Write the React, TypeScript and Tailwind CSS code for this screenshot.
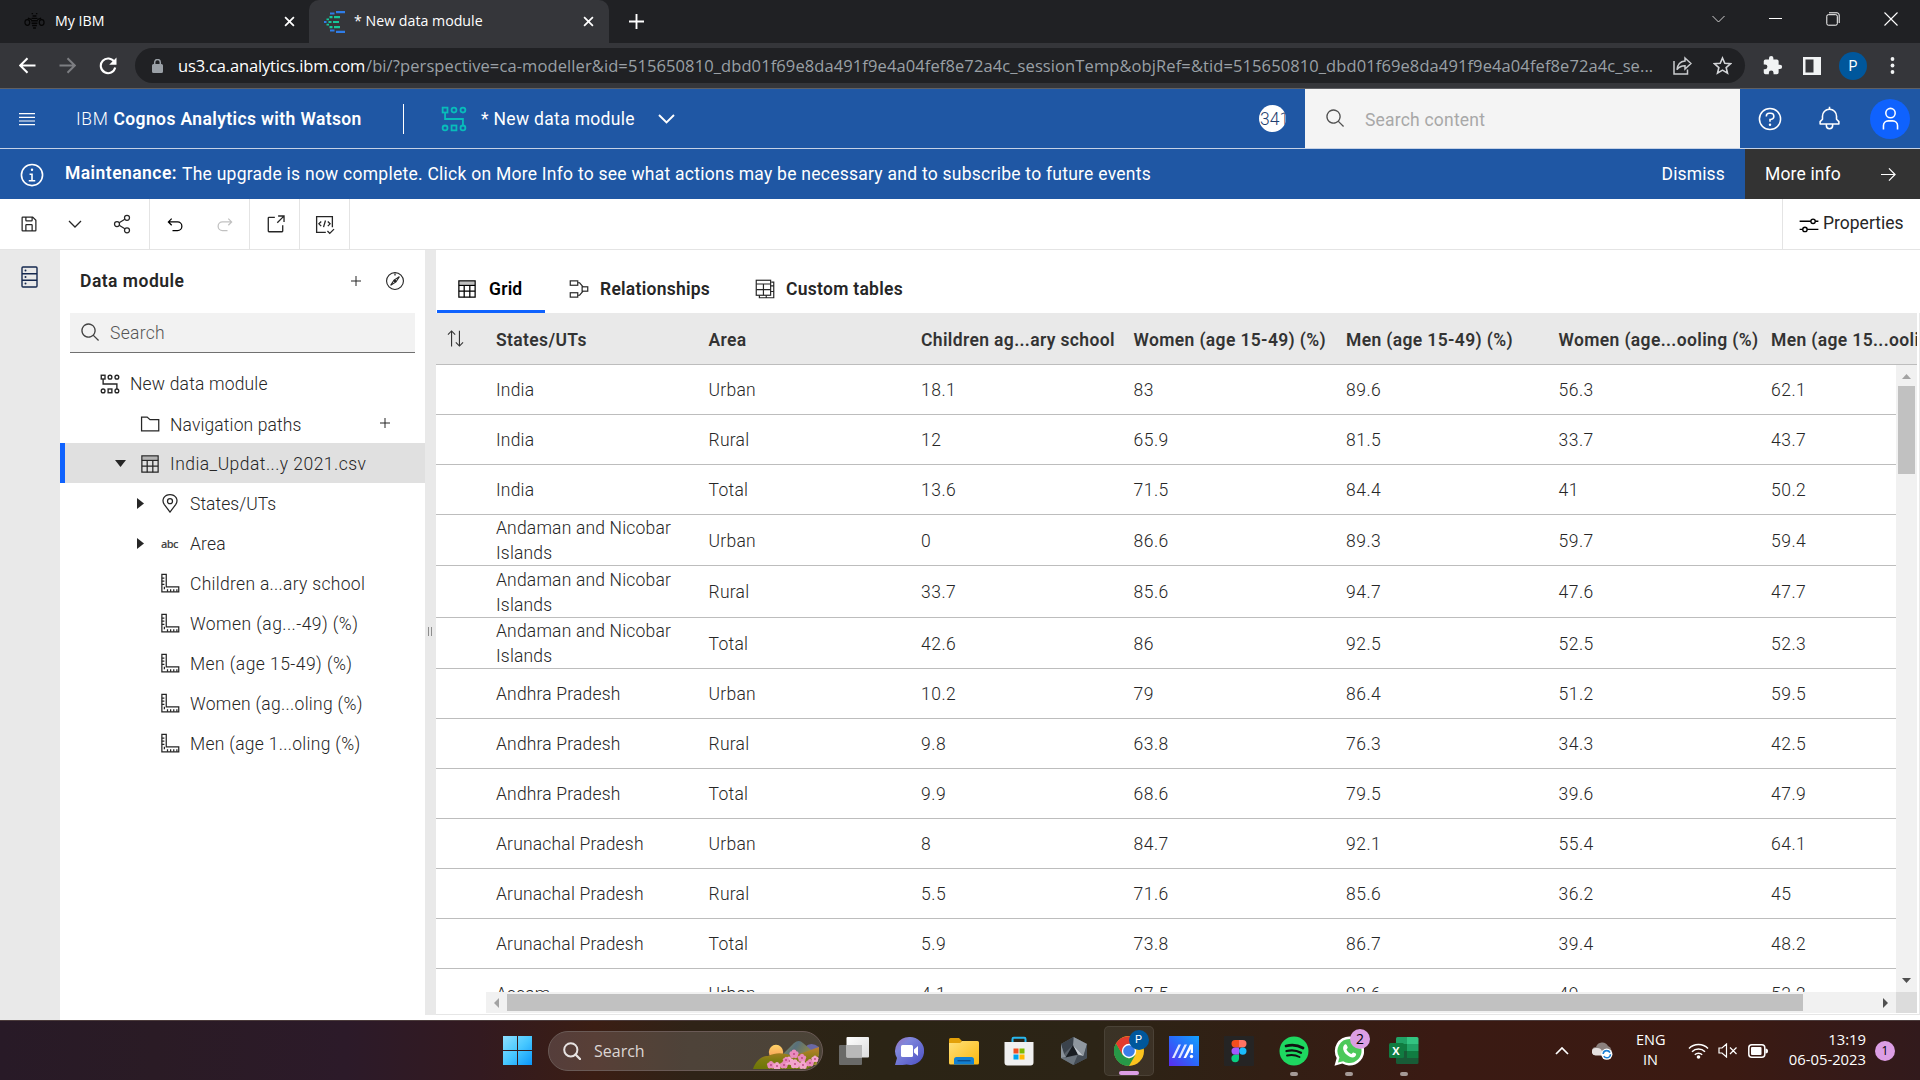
import React from "react";

type IconProps = { className?: string; children: React.ReactNode; box?: string };

function Icon({ className = "size-5", children, box = "0 0 32 32" }: IconProps) {
  return (
    <svg viewBox={box} className={`${className} shrink-0`} fill="currentColor" aria-hidden="true">
      {children}
    </svg>
  );
}

const line = { fill: "none", stroke: "currentColor", strokeWidth: 2 } as const;

/* ---------- shared icons ---------- */

const SearchIcon = ({ className }: { className?: string }) => (
  <Icon className={className}>
    <path d="M29 27.586l-7.552-7.552a11.018 11.018 0 1 0-1.414 1.414L27.586 29zM4 13a9 9 0 1 1 9 9 9.01 9.01 0 0 1-9-9z" />
  </Icon>
);

const ModuleIcon = ({ className }: { className?: string }) => (
  <Icon className={className}>
    <g {...line} strokeWidth="2.200">
      <rect x="2" y="2" width="6" height="6" />
      <circle cx="16" cy="5" r="3" />
      <circle cx="27" cy="5" r="3" />
      <circle cx="5" cy="27" r="3" />
      <rect x="13" y="24" width="6" height="6" />
      <circle cx="27" cy="27" r="3" />
      <path d="M5 8v8h22v8" />
    </g>
  </Icon>
);

const TableIcon = ({ className }: { className?: string }) => (
  <Icon className={className}>
    <g {...line}>
      <rect x="3" y="3" width="26" height="26" />
      <path d="M3 10h26M3 19.500h26M11.500 10v19M20.500 10v19" />
    </g>
    <path d="M4 4h24v5H4z" opacity=".25" />
  </Icon>
);

const PlusIcon = ({ className }: { className?: string }) => (
  <Icon className={className}>
    <path d="M17 15V6h-2v9H6v2h9v9h2v-9h9v-2z" />
  </Icon>
);

const RulerIcon = () => (
  <Icon className="size-[20px]">
    <g {...line}>
      <path d="M3 2h7v20h20v8H3z" />
      <path d="M3 8h4M3 13h4M3 18h4M12 30v-4M17 30v-4M22 30v-4M7 22v4M27 30v-4" />
    </g>
  </Icon>
);

const PinIcon = () => (
  <Icon className="size-[20px]">
    <g {...line}>
      <path d="M16 30.500L7 18.500C1.500 10.500 7.500 2.500 16 2.500s14.500 8 9 16z" />
      <circle cx="16" cy="13" r="4" />
    </g>
  </Icon>
);

/* ---------- browser chrome ---------- */

const TabClose = () => (
  <Icon className="size-[11px] text-white" box="0 0 12 12">
    <path d="M1.200 1.200l9.600 9.600M10.800 1.200l-9.600 9.600" stroke="currentColor" strokeWidth="1.900" />
  </Icon>
);

function BrowserTabs() {
  return (
    <div className="flex h-[43px] bg-[#202124] font-['Open_Sans',sans-serif] text-[14.2px] text-white">
      <div className="flex w-[309px] items-center pl-[24px]">
        <Icon className="size-[21px] text-[#050505]" box="0 0 22 18">
          <path d="M8 5h6v1.500H8zM7.500 7.500h7V9h-7zM8 10h6v1.500H8zM8.500 12.500h5V14h-5zM9.500 15h3v1.500h-3zM9 2.500h4V4H9zM8 0h1.500v1.500H8zM12.500 0H14v1.500h-1.500z" />
          <g fill="none" stroke="currentColor" strokeWidth="1.300">
            <path d="M8 7L4 5.500M14 7l4-1.500" />
            <ellipse cx="3.500" cy="10" rx="2.500" ry="3" />
            <ellipse cx="18.500" cy="10" rx="2.500" ry="3" />
          </g>
        </Icon>
        <span className="ml-[10px] pb-[2px]">My IBM</span>
        <span className="ml-auto pr-[14px]">
          <TabClose />
        </span>
      </div>
      <div className="flex w-[300px] items-center rounded-t-[10px] bg-[#35363a] pl-[15px]">
        <Icon className="size-[22px]" box="0 0 22 22">
          <g fill="#2f7de8">
            <path d="M12 0h9v2.200h-9zM12 19.800h9V22h-9zM6 1.500h4.500v2H6zM6 18.500h4.500v2H6zM0 10h2.500v2H0z" />
          </g>
          <g fill="#16c79a">
            <path d="M10 5h6v2.200h-6zM5.500 5h3v2.200h-3zM9 10h6v2H9zM4.500 10h3v2h-3zM10 15h6v2.200h-6zM5.500 15h3v2.200h-3zM2.500 7.500h2.500v1.700H2.500zM2.500 12.800h2.500v1.700H2.500z" />
          </g>
        </Icon>
        <span className="ml-[8px] pb-[2px]">* New data module</span>
        <span className="ml-auto pr-[15px]">
          <TabClose />
        </span>
      </div>
      <div className="flex flex-1 items-center pl-[20px]">
        <Icon className="size-[15px]" box="0 0 16 16">
          <path d="M7 0h2v7h7v2H9v7H7V9H0V7h7z" />
        </Icon>
        <div className="ml-auto flex items-center gap-[44px] pr-[22px] pb-[6px]">
          <Icon className="h-[8px] w-[13px]" box="0 0 13 8">
            <path d="M.5 1l6 6 6-6" fill="none" stroke="#d0d0d0" />
          </Icon>
          <Icon className="h-[13px] w-[13px]" box="0 0 13 13">
            <path d="M0 6.500h13" stroke="white" />
          </Icon>
          <Icon className="size-[14px]" box="0 0 14 14">
            <g fill="none" stroke="white">
              <rect x=".8" y="2.700" width="10.500" height="10.500" rx="1.500" />
              <path d="M3 .8h8a2.200 2.200 0 0 1 2.200 2.200v8" />
            </g>
          </Icon>
          <Icon className="size-[14px]" box="0 0 14 14">
            <path d="M.5.5l13 13M13.500.5l-13 13" stroke="white" strokeWidth="1.100" />
          </Icon>
        </div>
      </div>
    </div>
  );
}

function AddressBar() {
  return (
    <div className="flex h-[46px] items-center border-b border-[#5f6064] bg-[#35363a] pl-[19px]">
      <Icon className="size-[17px] text-white" box="0 0 17 17">
        <path d="M16.500 8.500H1.500M8.500 1.200L1.200 8.500l7.300 7.300" fill="none" stroke="currentColor" strokeWidth="2" />
      </Icon>
      <Icon className="ml-[23px] size-[17px] text-[#7d7e82]" box="0 0 17 17">
        <path d="M.5 8.500h15M8.500 1.200l7.300 7.300-7.300 7.300" fill="none" stroke="currentColor" strokeWidth="2" />
      </Icon>
      <Icon className="ml-[23px] size-[18px] text-white" box="0 0 18 18">
        <path d="M15.300 5A7.300 7.300 0 1 0 16.200 10.500" fill="none" stroke="currentColor" strokeWidth="2.100" />
        <path d="M17.500.5v7.300h-7.300z" />
      </Icon>
      <div className="ml-[18px] flex h-[35px] w-[1610px] items-center rounded-full bg-[#202124] pl-[17px] font-['Open_Sans',sans-serif] text-[16.5px]">
        <Icon className="h-[14px] w-[11px] text-[#9aa0a6]" box="0 0 11 14">
          <path d="M1.500 5h8A1.500 1.500 0 0 1 11 6.500v6A1.500 1.500 0 0 1 9.500 14h-8A1.500 1.500 0 0 1 0 12.500v-6A1.500 1.500 0 0 1 1.500 5z" />
          <path d="M2.700 5.500V3.300a2.800 2.800 0 0 1 5.600 0v2.200" fill="none" stroke="currentColor" strokeWidth="1.500" />
        </Icon>
        <div className="ml-[15px] flex w-[1479px] whitespace-nowrap">
          <span className="w-[188px] tracking-[-0.17px] text-white">us3.ca.analytics.ibm.com</span>
          <span className="tracking-[0.1px] text-[#9aa0a6]">
            /bi/?perspective=ca-modeller&amp;id=515650810_dbd01f69e8da491f9e4a04fef8e72a4c_sessionTemp&amp;objRef=&amp;tid=515650810_dbd01f69e8da491f9e4a04fef8e72a4c_se...
          </span>
        </div>
        <Icon className="ml-[16px] size-[19px] text-[#c9cbce]" box="0 0 19 19">
          <g fill="none" stroke="currentColor" strokeWidth="1.500">
            <path d="M1 5v13h13.500v-4.500" />
            <path d="M12 2l6 5.500-6 5.500v-3.300c-3.500 0-6 1-8 4 .5-5 3.500-8.300 8-8.700z" />
          </g>
        </Icon>
        <Icon className="ml-[21px] size-[19px] text-[#d3d5d8]" box="0 0 24 24">
          <path
            d="M12 2.500l2.900 6.700 7.200.6-5.500 4.800 1.700 7.100L12 17.900l-6.300 3.800 1.700-7.100L1.900 9.800l7.200-.6z"
            fill="none"
            stroke="currentColor"
            strokeWidth="2"
          />
        </Icon>
      </div>
      <Icon className="ml-[17px] size-[21px] text-[#f1f3f4]" box="0 0 24 24">
        <path d="M20.500 11H19V7a2 2 0 0 0-2-2h-4V3.500a2.500 2.500 0 0 0-5 0V5H4a2 2 0 0 0-2 2v3.800h1.500a2.700 2.700 0 0 1 0 5.400H2V20a2 2 0 0 0 2 2h3.800v-1.500a2.700 2.700 0 0 1 5.400 0V22H17a2 2 0 0 0 2-2v-4h1.500a2.500 2.500 0 0 0 0-5z" />
      </Icon>
      <Icon className="ml-[20px] size-[18px] text-[#f1f3f4]" box="0 0 18 18">
        <path d="M0 0h18v18H0zM2.500 2.500v13h8v-13z" fillRule="evenodd" />
      </Icon>
      <span className="ml-[18px] flex size-[28px] items-center justify-center rounded-full bg-[#00579c] font-['Roboto'] text-[14px] text-white">
        P
      </span>
      <Icon className="ml-[23px] h-[17px] w-[5px] text-[#f1f3f4]" box="0 0 5 17">
        <circle cx="2.500" cy="2" r="1.900" />
        <circle cx="2.500" cy="8.500" r="1.900" />
        <circle cx="2.500" cy="15" r="1.900" />
      </Icon>
    </div>
  );
}

/* ---------- Cognos header ---------- */

function AppHeader() {
  return (
    <header className="flex h-[60px] items-center border-b border-[#c6d2e6] bg-[#1f57a4] text-white">
      <Icon className="ml-[19px] size-[16px]" box="0 0 16 16">
        <path d="M0 2h16v1.200H0zM0 5.700h16v1.200H0zM0 9.400h16v1.200H0zM0 13.100h16v1.200H0z" />
      </Icon>
      <div className="ml-[41px] w-[286px] whitespace-nowrap">
        <span className="mr-[5px] font-light tracking-[0.65px]">IBM</span>
        <span className="font-semibold tracking-[0.38px]">Cognos Analytics with Watson</span>
      </div>
      <div className="ml-[41px] h-[30px] w-px bg-white" />
      <ModuleIcon className="ml-[37px] size-[26px] text-[#08bdba]" />
      <span className="ml-[14px] w-[154px] tracking-[0.32px] whitespace-nowrap">* New data module</span>
      <Icon className="ml-[23px] h-[10px] w-[17px]" box="0 0 17 10">
        <path d="M1 1l7.500 7.500L16 1" fill="none" stroke="white" strokeWidth="1.900" />
      </Icon>
      <span className="mr-[19px] ml-auto flex size-[27px] items-center overflow-hidden rounded-full bg-white pl-px text-[17.5px] font-light whitespace-nowrap text-[#1f3f70]">
        341
      </span>
      <div className="flex h-full w-[435px] items-center bg-[#f4f4f4] pl-[20px]">
        <SearchIcon className="size-[21px] text-[#525252]" />
        <span className="ml-[19px] pt-[2px] tracking-[0.2px] text-[#a8a8a8]">Search content</span>
      </div>
      <div className="flex w-[180px] items-center pl-[17px]">
        <Icon className="size-[26px]">
          <g {...line} strokeWidth="1.900">
            <circle cx="16" cy="16" r="13" />
            <path d="M11.500 13v-.5a3.500 3.500 0 0 1 3.500-3.500h2a3.500 3.500 0 0 1 0 7.500h-1v3" />
          </g>
          <circle cx="16" cy="23" r="1.500" />
        </Icon>
        <Icon className="ml-[34px] size-[25px]">
          <path d="M28.707 19.293 26 16.586V13a10.014 10.014 0 0 0-9-9.950V1h-2v2.050A10.014 10.014 0 0 0 6 13v3.586l-2.707 2.707A1 1 0 0 0 3 20v3a1 1 0 0 0 1 1h7v1a5 5 0 0 0 10 0v-1h7a1 1 0 0 0 1-1v-3a1 1 0 0 0-.293-.707zM19 25a3 3 0 0 1-6 0v-1h6zm8-3H5v-1.586l2.707-2.707A1 1 0 0 0 8 17v-4a8 8 0 0 1 16 0v4a1 1 0 0 0 .293.707L27 20.414z" />
        </Icon>
        <span className="ml-[28px] flex size-[40px] items-center justify-center rounded-full bg-[#0f62fe]">
          <Icon className="size-[25px]">
            <path d="M16 4a5 5 0 1 1-5 5 5 5 0 0 1 5-5m0-2a7 7 0 1 0 7 7 7 7 0 0 0-7-7zM26 30h-2v-5a5 5 0 0 0-5-5h-6a5 5 0 0 0-5 5v5H6v-5a7 7 0 0 1 7-7h6a7 7 0 0 1 7 7z" />
          </Icon>
        </span>
      </div>
    </header>
  );
}

function MaintenanceBanner() {
  return (
    <div className="flex h-[50px] items-center bg-[#1f57a4] whitespace-nowrap text-white">
      <Icon className="mt-[2px] ml-[19px] size-[26px]">
        <circle cx="16" cy="16" r="13" {...line} />
        <path d="M17 22v-8h-4v2h2v6h-3v2h8v-2zM16 8a1.500 1.500 0 1 0 1.500 1.500A1.500 1.500 0 0 0 16 8z" />
      </Icon>
      <span className="ml-[20px] w-[117px] pb-[2px] font-semibold tracking-[0.45px]">Maintenance:</span>
      <span className="tracking-[0.25px]">
        The upgrade is now complete. Click on More Info to see what actions may be necessary and to subscribe to future
        events
      </span>
      <span className="mr-[20px] ml-auto tracking-[0.15px]">Dismiss</span>
      <div className="flex h-full w-[175px] items-center bg-[#333333] pl-[20px]">
        <span className="w-[116px] tracking-[0.15px]">More info</span>
        <Icon className="size-[15px]" box="0 0 16 16">
          <path d="M0 8h15M8.500 1.500L15 8l-6.500 6.500" fill="none" stroke="white" strokeWidth="1.300" />
        </Icon>
      </div>
    </div>
  );
}

/* ---------- toolbar ---------- */

function Toolbar() {
  return (
    <div className="flex h-[51px] border-b border-[#e4e4e4] bg-white text-[#262626]">
      <div className="flex w-[150px] items-center border-r border-[#e4e4e4] pl-[19px]">
        <Icon className="size-[20px]">
          <path d="M27.710 9.290l-5-5A1 1 0 0 0 22 4H6a2 2 0 0 0-2 2v20a2 2 0 0 0 2 2h20a2 2 0 0 0 2-2V10a1 1 0 0 0-.290-.710zM12 6h8v4h-8zm8 20h-8v-8h8zm2 0v-8a2 2 0 0 0-2-2h-8a2 2 0 0 0-2 2v8H6V6h4v4a2 2 0 0 0 2 2h8a2 2 0 0 0 2-2V6.410l4 4V26z" />
        </Icon>
        <Icon className="ml-[29px] h-[8px] w-[14px]" box="0 0 14 8">
          <path d="M1 1l6 6 6-6" fill="none" stroke="currentColor" strokeWidth="1.300" />
        </Icon>
        <Icon className="ml-[30px] size-[20px]">
          <g {...line}>
            <circle cx="24" cy="6" r="4" />
            <circle cx="24" cy="26" r="4" />
            <circle cx="8" cy="16" r="4" />
            <path d="M11.500 14l9-5.500M11.500 18l9 5.500" />
          </g>
        </Icon>
      </div>
      <div className="flex w-[100px] items-center border-r border-[#e4e4e4] pl-[15px]">
        <Icon className="mt-[2px] size-[20px] text-black">
          <path d="M20 10H7.815l3.587-3.586L10 5l-6 6 6 6 1.402-1.415L7.818 12H20a6 6 0 0 1 0 12h-8v2h8a8 8 0 0 0 0-16z" />
        </Icon>
        <Icon className="mt-[2px] ml-[30px] size-[20px] text-[#c1c1c1]">
          <path d="M12 10h12.185l-3.587-3.586L22 5l6 6-6 6-1.402-1.415L24.182 12H12a6 6 0 0 0 0 12h8v2h-8a8 8 0 0 1 0-16z" />
        </Icon>
      </div>
      <div className="flex w-[50px] items-center justify-center border-r border-[#e4e4e4] pl-px">
        <Icon className="size-[21px]">
          <path d="M26 28H6a2 2 0 0 1-2-2V6a2 2 0 0 1 2-2h9v2H6v20h20v-9h2v9a2 2 0 0 1-2 2z" />
          <path d="M20 2v2h6.586L18 12.586 19.414 14 28 5.414V12h2V2z" />
        </Icon>
      </div>
      <div className="flex w-[50px] items-center justify-center border-r border-[#e4e4e4]">
        <Icon className="size-[21px]">
          <g {...line}>
            <path d="M28 20V4H4v24h14M20.500 26l3.500 3.500 6.500-6.500" />
            <path d="M11 11.500L7.500 15l3.500 3.500M21 11.500l3.500 3.500-3.500 3.500M17.500 10l-3 10" />
          </g>
        </Icon>
      </div>
      <div className="ml-auto flex w-[138px] items-center border-l border-[#e4e4e4] pl-[16px]">
        <Icon className="mt-[1px] size-[20px] text-black">
          <g {...line} strokeWidth="2.200">
            <path d="M1 10h18M26 10h5M1 23h5M13 23h18" />
            <circle cx="22.500" cy="10" r="3.500" />
            <circle cx="9.500" cy="23" r="3.500" />
          </g>
        </Icon>
        <span className="ml-[4px] pb-[2px] text-[#262626]">Properties</span>
      </div>
    </div>
  );
}

/* ---------- data module panel ---------- */

const Caret = ({ open }: { open?: boolean }) =>
  open ? (
    <Icon className="h-[7px] w-[11px]" box="0 0 11 7">
      <path d="M0 0h11L5.500 7z" />
    </Icon>
  ) : (
    <Icon className="h-[11px] w-[7px]" box="0 0 7 11">
      <path d="M0 0v11l7-5.500z" />
    </Icon>
  );

const measures = [
  "Children a...ary school",
  "Women (ag...-49) (%)",
  "Men (age 15-49) (%)",
  "Women (ag...oling (%)",
  "Men (age 1...oling (%)",
];

function ModulePanel() {
  return (
    <aside className="flex w-[365px] flex-col bg-white font-light text-[#262626]">
      <div className="flex h-[63px] items-center pb-[2px] pl-[20px]">
        <span className="font-semibold tracking-[0.48px]">Data module</span>
        <PlusIcon className="ml-auto size-[16px]" />
        <Icon className="mr-[20px] ml-[21px] size-[20px]">
          <g {...line} strokeWidth="1.800">
            <circle cx="16" cy="16" r="13.500" />
            <path d="M23 9L14.500 14.500 9 23l8.500-5.500z" />
          </g>
          <circle cx="16" cy="16" r="2" />
          <path d="M15 4h2v3h-2z" />
        </Icon>
      </div>
      <div className="mx-[10px] flex h-[40px] items-center border-b border-[#707070] bg-[#f2f2f2] pl-[10px]">
        <SearchIcon className="size-[21px] text-[#444]" />
        <span className="ml-[9px] tracking-[0.3px] text-[#555]">Search</span>
      </div>
      <div className="flex flex-col pt-[10px] tracking-[0.18px] whitespace-nowrap">
        <div className="flex h-[41px] items-center pl-[40px]">
          <ModuleIcon className="size-[20px]" />
          <span className="ml-[10px]">New data module</span>
        </div>
        <div className="flex h-[39px] items-center pl-[80px]">
          <Icon className="size-[20px]">
            <path d="M2.500 5h9l4.500 4h14v18H2.500z" {...line} />
          </Icon>
          <span className="ml-[10px] pt-[2px] tracking-[0.12px]">Navigation paths</span>
          <PlusIcon className="mr-[32px] mb-px ml-auto size-[16px]" />
        </div>
        <div className="flex h-[40px] items-center border-l-[5px] border-[#0f62fe] bg-[#e0e0e0] pl-[50px]">
          <Caret open />
          <span className="ml-[14px] pt-px">
            <TableIcon className="size-[20px]" />
          </span>
          <span className="ml-[10px] pt-[2px] tracking-[0.46px]">India_Updat...y 2021.csv</span>
        </div>
        <div className="flex h-[40px] items-center pl-[77px]">
          <Caret />
          <span className="ml-[16px]">
            <PinIcon />
          </span>
          <span className="ml-[10px] pt-[2px] tracking-[0.05px]">States/UTs</span>
        </div>
        <div className="flex h-[40px] items-center pl-[77px]">
          <Caret />
          <span className="ml-[17px] w-[19px] font-['Open_Sans',sans-serif] text-[11px] leading-none font-semibold tracking-[-0.6px] text-[#444]">
            abc
          </span>
          <span className="ml-[10px] pt-[2px]">Area</span>
        </div>
        {measures.map((name, i) => (
          <div key={name} className="flex h-[40px] items-center pl-[100px]">
            <RulerIcon />
            <span className={i === 1 || i === 2 ? "ml-[10px] pt-[2px] tracking-[0.44px]" : "ml-[10px] pt-[2px] tracking-[0.3px]"}>
              {name}
            </span>
          </div>
        ))}
      </div>
    </aside>
  );
}

/* ---------- grid ---------- */

const columns = [
  "States/UTs",
  "Area",
  "Children ag...ary school",
  "Women (age 15-49) (%)",
  "Men (age 15-49) (%)",
  "Women (age...ooling (%)",
  "Men (age 15...ooling (%)",
];

const rows: string[][] = [
  ["India", "Urban", "18.1", "83", "89.6", "56.3", "62.1"],
  ["India", "Rural", "12", "65.9", "81.5", "33.7", "43.7"],
  ["India", "Total", "13.6", "71.5", "84.4", "41", "50.2"],
  ["Andaman and Nicobar Islands", "Urban", "0", "86.6", "89.3", "59.7", "59.4"],
  ["Andaman and Nicobar Islands", "Rural", "33.7", "85.6", "94.7", "47.6", "47.7"],
  ["Andaman and Nicobar Islands", "Total", "42.6", "86", "92.5", "52.5", "52.3"],
  ["Andhra Pradesh", "Urban", "10.2", "79", "86.4", "51.2", "59.5"],
  ["Andhra Pradesh", "Rural", "9.8", "63.8", "76.3", "34.3", "42.5"],
  ["Andhra Pradesh", "Total", "9.9", "68.6", "79.5", "39.6", "47.9"],
  ["Arunachal Pradesh", "Urban", "8", "84.7", "92.1", "55.4", "64.1"],
  ["Arunachal Pradesh", "Rural", "5.5", "71.6", "85.6", "36.2", "45"],
  ["Arunachal Pradesh", "Total", "5.9", "73.8", "86.7", "39.4", "48.2"],
  ["Assam", "Urban", "4.1", "87.5", "92.6", "49", "53.2"],
];

function GridView() {
  return (
    <section className="flex min-w-0 flex-1 flex-col bg-white">
      <nav className="flex h-[63px] items-end pl-px font-semibold text-[#262626]">
        <div className="flex h-[47px] w-[108px] items-center border-b-[3px] border-[#0f62fe] pt-px pl-[20px] text-black">
          <TableIcon className="size-[20px]" />
          <span className="ml-[12px] pt-px tracking-[0.2px]">Grid</span>
        </div>
        <div className="flex h-[47px] items-center border-b-[3px] border-transparent pt-px pl-[24px]">
          <Icon className="size-[20px]">
            <g {...line} strokeWidth="1.900">
              <rect x="2" y="3" width="12" height="7" />
              <rect x="2" y="22" width="12" height="7" />
              <rect x="21" y="12.500" width="9" height="7" />
              <path d="M14 6h3l5.500 6.500M14 26h3l5.500-6.500" />
            </g>
          </Icon>
          <span className="ml-[11px] w-[110px] pt-px tracking-[0.26px]">Relationships</span>
        </div>
        <div className="flex h-[47px] items-center border-b-[3px] border-transparent pt-px pl-[45px]">
          <Icon className="size-[20px]">
            <g {...line} strokeWidth="1.900">
              <rect x="2" y="2" width="23" height="24" />
              <path d="M2 8h23M2 17h23M13.500 8v18M26 5h4v25H7v-4M25 11h5M25 20h5M18 26v4" />
            </g>
          </Icon>
          <span className="ml-[11px] pt-px tracking-[0.28px]">Custom tables</span>
        </div>
      </nav>

      <div className="flex min-h-0 flex-1">
        <div className="flex min-w-0 flex-1 flex-col">
          <div className="flex h-[52px] shrink-0 items-center overflow-hidden border-b border-[#bdbdbd] bg-[#e9e9e9] font-semibold tracking-[0.36px] whitespace-nowrap text-[#333]">
            <div className="w-[60px] shrink-0 pl-[9px]">
              <Icon className="size-[21px]">
                <g {...line} strokeWidth="1.700">
                  <path d="M10 28V5M4.500 10L10 4.500l5.500 5.500M22 4v23M16.500 22l5.500 5.500 5.500-5.500" />
                </g>
              </Icon>
            </div>
            {columns.map((c) => (
              <div key={c} className="w-[212.5px] shrink-0 pt-[2px]">
                {c}
              </div>
            ))}
          </div>
          <div className="flex min-h-0 flex-1">
            <div className="flex w-[1460px] shrink-0 flex-col">
              <div className="h-[627px] overflow-hidden font-light text-[#262626]">
                {rows.map((row, i) => (
                  <div
                    key={i}
                    className={`flex items-center overflow-hidden border-b border-[#bdbdbd] pl-[60px] ${
                      i === 4 ? "h-[52px]" : i === 3 || i === 5 ? "h-[51px]" : "h-[50px]"
                    }`}
                  >
                    {row.map((cell, j) => (
                      <div
                        key={j}
                        className={
                          j === 0
                            ? "w-[212.5px] shrink-0 pt-[2px] pr-[30px] leading-[25px] tracking-[0.18px]"
                            : j === 1
                              ? "w-[212.5px] shrink-0 pt-px tracking-[0.28px]"
                              : "w-[212.5px] shrink-0 pt-px tracking-[0.5px]"
                        }
                      >
                        {cell}
                      </div>
                    ))}
                  </div>
                ))}
              </div>
              <div className="flex">
                <div className="w-[50px]" />
                <div className="flex h-[21px] flex-1 items-center bg-[#f1f1f1] pl-[8px]">
                  <Icon className="h-[10px] w-[5px] text-[#a3a3a3]" box="0 0 5 10">
                    <path d="M5 0v10L0 5z" />
                  </Icon>
                  <div className="ml-[8px] h-[17px] w-[1296px] bg-[#c1c1c1]" />
                  <Icon className="mr-[8px] ml-auto h-[10px] w-[5px] text-[#505050]" box="0 0 5 10">
                    <path d="M0 0v10l5-5z" />
                  </Icon>
                </div>
              </div>
            </div>
            <div className="flex w-[21px] flex-col">
              <div className="flex h-[627px] flex-col items-center bg-[#f1f1f1] pt-[9px] pb-[9px]">
                <Icon className="h-[5px] w-[9px] text-[#a3a3a3]" box="0 0 9 5">
                  <path d="M0 5h9L4.500 0z" />
                </Icon>
                <div className="mt-[7px] h-[88px] w-[17px] bg-[#c1c1c1]" />
                <Icon className="mt-auto h-[5px] w-[9px] text-[#505050]" box="0 0 9 5">
                  <path d="M0 0h9L4.500 5z" />
                </Icon>
              </div>
              <div className="h-[21px] bg-[#dcdcdc]" />
            </div>
          </div>
        </div>
        <div className="w-[3px] border-r border-[#e9e9e9]" />
      </div>
    </section>
  );
}

/* ---------- taskbar ---------- */

const Slot = ({ children, dot }: { children: React.ReactNode; dot?: boolean }) => (
  <div className="relative flex h-[50px] w-[55px] items-center justify-center">
    {children}
    {dot && <span className="absolute bottom-0 h-[4px] w-[8px] rounded-full bg-[#a59a97]" />}
  </div>
);

const WindowsLogo = () => (
  <Icon className="size-[29px]" box="0 0 29 29">
    <defs>
      <linearGradient id="win" x1="0" y1="0" x2="1" y2="1">
        <stop offset="0" stopColor="#8ee0ff" />
        <stop offset=".5" stopColor="#48c8ff" />
        <stop offset="1" stopColor="#0a96fa" />
      </linearGradient>
    </defs>
    <path d="M0 0h14v14H0zM15 0h14v14H15zM0 15h14v14H0zM15 15h14v14H15z" fill="url(#win)" />
  </Icon>
);

const blossoms: [number, number, number][] = [
  [18, 25, 2], [24, 26, 2], [31, 25, 2], [36, 21, 2.2], [41, 14, 2.3], [42, 24, 2.4], [49, 18, 2.1], [50, 25, 2.2],
  [57, 23, 2], [62, 19, 1.8], [33, 20, 1.6],
];

const SearchScene = () => (
  <Icon className="h-[29px] w-[67px]" box="0 0 67 29">
    <defs>
      <linearGradient id="hill" x1="0" y1="0" x2="1" y2=".4">
        <stop offset="0" stopColor="#9a9a4a" />
        <stop offset=".45" stopColor="#58707c" />
        <stop offset="1" stopColor="#a08f35" />
      </linearGradient>
      <linearGradient id="sun" x1="0" y1="0" x2="0" y2="1">
        <stop offset="0" stopColor="#ffd268" />
        <stop offset="1" stopColor="#f59a55" />
      </linearGradient>
      <linearGradient id="field" x1="0" y1="0" x2="0" y2="1">
        <stop offset="0" stopColor="#c08030" />
        <stop offset=".6" stopColor="#7d7c10" />
        <stop offset="1" stopColor="#6c7606" />
      </linearGradient>
    </defs>
    <path d="M52 7q6-6 14 0v9H50z" fill="#6a68a4" />
    <circle cx="23" cy="12" r="7.200" fill="url(#sun)" />
    <path d="M26 18L41 3q5-4 9 0l14 12v10H26z" fill="url(#hill)" />
    <path d="M0 29c3-8 8-13 15-13 8-4 15-3 22-1 10 0 17-4 29-8v7c-1 7-5 12-12 15z" fill="url(#field)" />
    {blossoms.map(([x, y, r], i) => (
      <g key={i}>
        <g fill={i % 2 ? "#f3a6cd" : "#e98bbd"}>
          <circle cx={x - r} cy={y - 0.4} r={r} />
          <circle cx={x + r} cy={y - 0.4} r={r} />
          <circle cx={x} cy={y - r} r={r} />
          <circle cx={x - r * 0.7} cy={y + r * 0.8} r={r} />
          <circle cx={x + r * 0.7} cy={y + r * 0.8} r={r} />
        </g>
        <circle cx={x} cy={y} r=".9" fill="#b8407f" />
      </g>
    ))}
  </Icon>
);

const TaskView = () => (
  <Icon className="size-[30px]" box="0 0 30 30">
    <defs>
      <linearGradient id="tvA" x1="0" y1="0" x2="1" y2="1">
        <stop offset="0" stopColor="#fff" />
        <stop offset="1" stopColor="#dcdcdc" />
      </linearGradient>
    </defs>
    <rect x="0" y="9" width="23" height="20" rx="1" fill="#6a6a68" />
    <rect x="7.500" y="1" width="22.500" height="20.500" rx="1" fill="url(#tvA)" />
    <rect x="7.500" y="9" width="15.500" height="12.500" fill="#b9b9b9" />
  </Icon>
);

const ChatApp = () => (
  <Icon className="size-[30px]" box="0 0 30 30">
    <defs>
      <linearGradient id="chat" x1="0" y1="0" x2="1" y2="1">
        <stop offset="0" stopColor="#9a6fb8" />
        <stop offset=".3" stopColor="#7f86dc" />
        <stop offset="1" stopColor="#4b4fc4" />
      </linearGradient>
    </defs>
    <path d="M15.500 1a14 14 0 1 1-3 27.500Q10 29 1 29l2-7A14 14 0 0 1 15.500 1z" fill="url(#chat)" />
    <rect x="7" y="9" width="12" height="12" rx="1.500" fill="#fff" />
    <path d="M20 13.500l4-3.500v10l-4-3.500z" fill="#fff" />
  </Icon>
);

const Explorer = () => (
  <Icon className="size-[30px]" box="0 0 30 30">
    <defs>
      <linearGradient id="fold" x1="0" y1="0" x2="1" y2="1">
        <stop offset="0" stopColor="#ffe07a" />
        <stop offset="1" stopColor="#fbb80e" />
      </linearGradient>
    </defs>
    <path d="M0 3.500A1.500 1.500 0 0 1 1.500 2H10l3 3-3 4H0z" fill="#e3a008" />
    <path d="M0 7h11l2-2h15.500A1.500 1.500 0 0 1 30 6.500V27a1.500 1.500 0 0 1-1.500 1.500h-27A1.500 1.500 0 0 1 0 27z" fill="url(#fold)" />
    <path d="M5 28.500v-5a2.500 2.500 0 0 1 2.500-2.500h15a2.500 2.500 0 0 1 2.500 2.500v5z" fill="#1180d2" />
    <path d="M8.500 24h13v1.400h-13z" fill="#0a4e8f" />
  </Icon>
);

const Store = () => (
  <Icon className="size-[30px]" box="0 0 30 30">
    <path d="M8.500 7V3a1.200 1.200 0 0 1 1.200-1.200h10.600A1.200 1.200 0 0 1 21.500 3v4" fill="none" stroke="#28b8f0" strokeWidth="2" />
    <path d="M.5 6h29v20.500a3 3 0 0 1-3 3h-23a3 3 0 0 1-3-3z" fill="#f0f0f0" />
    <path d="M9.500 12.500h5v5h-5z" fill="#f25022" />
    <path d="M15.500 12.500h5v5h-5z" fill="#7fba00" />
    <path d="M9.500 18.500h5v5h-5z" fill="#00a4ef" />
    <path d="M15.500 18.500h5v5h-5z" fill="#ffb900" />
  </Icon>
);

const Prism = () => (
  <Icon className="size-[30px]" box="0 0 30 30">
    <path d="M14.500 1L28 8v14l-13.500 7L2 22V8z" fill="#59616a" />
    <path d="M14.500 1L28 8l-3.500 12L14 9z" fill="#8f979f" />
    <path d="M14.500 1L14 9 5 18 2 8z" fill="#3b434c" />
    <path d="M2 8l3 10 2 3-5 1z" fill="#8a939c" />
    <path d="M2 22l5-1 11.500-1.500L14.500 29z" fill="#6a737c" />
    <path d="M14 9l5 9.500L6.500 21.500z" fill="#191d22" />
    <path d="M14 9l10.500 11-5.500-1.500z" fill="#c3c9cf" />
    <path d="M28 8v14l-13.500 7 4-9.500 6 .5z" fill="#444c55" />
  </Icon>
);

const Chrome = () => (
  <Icon className="size-[30px]" box="0 0 30 30">
    <circle cx="15" cy="15" r="15" fill="#fcc31e" />
    <path d="M2 7.500l6.500 11.200 6 3L11 29.400A15 15 0 0 1 2 7.500z" fill="#279847" />
    <path d="M21.500 18.700L15 30A15 15 0 0 1 2 7.500l6.500 11.200 6.500 3.800z" fill="#279847" />
    <path d="M15 8h13a15 15 0 0 0-26-.5l6.500 11.200z" fill="#e33b2e" />
    <circle cx="15" cy="15" r="7.200" fill="#fff" />
    <circle cx="15" cy="15" r="5.800" fill="#3b7de9" />
  </Icon>
);

const MyAsus = () => (
  <Icon className="size-[30px]" box="0 0 30 30">
    <defs>
      <linearGradient id="asus" x1="0" y1="1" x2="1" y2="0">
        <stop offset="0" stopColor="#5a2cf0" />
        <stop offset=".5" stopColor="#2a68fa" />
        <stop offset="1" stopColor="#12a2ff" />
      </linearGradient>
    </defs>
    <path d="M0 0h30v30H0z" fill="url(#asus)" />
    <path d="M3 22L9.500 8.500H12L5.500 22zM9 22l6.500-13.500H18L11.500 22z" fill="#dfe7ff" />
    <path d="M14.500 22L21 8.500h3V17h-2.300v-4L17 22z" fill="#fff" />
    <circle cx="22.500" cy="20.500" r="1.700" fill="#fff" />
  </Icon>
);

const Figma = () => (
  <Icon className="size-[30px]" box="0 0 30 30">
    <rect width="30" height="30" rx="1" fill="#252424" />
    <path d="M15 4h-3.800a3.700 3.700 0 0 0 0 7.400H15z" fill="#f24e1e" />
    <path d="M15 4h3.800a3.700 3.700 0 0 1 0 7.400H15z" fill="#ff7262" />
    <path d="M15 11.400h-3.800a3.700 3.700 0 0 0 0 7.400H15z" fill="#a259ff" />
    <circle cx="18.800" cy="15.100" r="3.700" fill="#1abcfe" />
    <path d="M11.200 18.800H15v3.700a3.800 3.700 0 1 1-3.800-3.700z" fill="#0acf83" />
  </Icon>
);

const Spotify = () => (
  <Icon className="size-[30px]" box="0 0 30 30">
    <circle cx="15" cy="15" r="14.500" fill="#1ed760" />
    <g fill="none" stroke="#111" strokeLinecap="round">
      <path d="M7 10q9-2.500 17 2" strokeWidth="2.700" />
      <path d="M7.500 15q8-2 14.500 1.700" strokeWidth="2.300" />
      <path d="M8 19.500q7-1.500 12.500 1.500" strokeWidth="1.900" />
    </g>
  </Icon>
);

const WhatsApp = () => (
  <Icon className="size-[30px]" box="0 0 30 30">
    <path d="M15.500.5A14.500 14.500 0 1 1 8.300 27.500L.5 29.700l2.200-7.600A14.500 14.500 0 0 1 15.500.5z" fill="#fff" />
    <path d="M15.500 3a12 12 0 1 1-6.300 22.200L4 26.500l1.400-5A12 12 0 0 1 15.500 3z" fill="#4cc95a" />
    <path
      d="M10.700 8.500c.8-.6 1.600-.4 2 .5l1 2.300c.2.700-1 1.700-1.200 2.200.9 2.100 2.800 3.700 4.800 4.500.7-.5 1.400-1.800 2-1.600l2.500 1.200c.8.600.1 2.400-1 3.200-1.500 1-3.500.6-5.600-.4-3-1.500-5.300-4.200-6-7.200-.3-1.900.3-3.700 1.500-4.700z"
      fill="#fff"
    />
  </Icon>
);

const Excel = () => (
  <div className="relative size-[30px]">
    <Icon className="size-[30px]" box="0 0 30 30">
      <path d="M7 2.500A1.500 1.500 0 0 1 8.500 1H18v7H7z" fill="#21a366" />
      <path d="M18 1h10a1.500 1.500 0 0 1 1.500 1.500V8H18z" fill="#33c481" />
      <path d="M7 8h11v7H7z" fill="#107c41" />
      <path d="M18 8h11.500v7H18z" fill="#21a366" />
      <path d="M7 15h11v7H7z" fill="#185c37" />
      <path d="M18 15h11.500v7H18z" fill="#107c41" />
      <path d="M7 22h22.500v4.500A1.500 1.500 0 0 1 28 28H8.500A1.500 1.500 0 0 1 7 26.500z" fill="#185c37" />
      <rect x="0" y="7" width="15" height="15" rx="1.500" fill="#107c41" />
    </Icon>
    <span className="absolute top-[7px] left-0 flex size-[15px] items-center justify-center font-['Open_Sans'] text-[11px] leading-none font-bold text-white">
      X
    </span>
  </div>
);

function Taskbar() {
  return (
    <footer className="flex h-[60px] items-center border-t border-[#4b3b3b] bg-[linear-gradient(90deg,#281a27_0%,#2a1b25_8%,#2c1a29_18%,#331a20_25%,#3b1e14_31%,#2f2317_36%,#2b2415_46%,#2c2416_57%,#321f14_66%,#3a1a13_75%,#3b1a12_90%,#321a1c_100%)] pl-[503px] font-['Open_Sans',sans-serif] text-[15px] text-white">
      <WindowsLogo />
      <div className="ml-[16px] flex h-[40px] w-[275px] items-center overflow-hidden rounded-full border border-[#6a5a56] bg-[#ffffff26] pl-[14px]">
        <Icon className="size-[18px] text-[#e6e2e1]" box="0 0 18 18">
          <circle cx="7.800" cy="7.800" r="6.600" fill="none" stroke="currentColor" strokeWidth="2" />
          <path d="M12.500 12.500l4.500 4.500" stroke="currentColor" strokeWidth="2.400" strokeLinecap="round" />
        </Icon>
        <span className="ml-[13px] text-[16px] text-[#dcd6d4]">Search</span>
        <div className="mt-[8px] mr-[2px] ml-auto">
          <SearchScene />
        </div>
      </div>
      <div className="ml-[3px] flex items-center">
        <Slot><TaskView /></Slot>
        <Slot><ChatApp /></Slot>
        <Slot><Explorer /></Slot>
        <Slot><Store /></Slot>
        <Slot><Prism /></Slot>
        <div className="relative mx-[2.5px] flex size-[50px] items-center justify-center rounded-[5px] border border-[#ffffff14] bg-[#ffffff12]">
          <Chrome />
          <span className="absolute top-[3px] right-[4px] flex size-[20px] items-center justify-center rounded-full bg-[#00579c] font-['Roboto'] text-[11px] text-white">
            P
          </span>
          <span className="absolute bottom-0 h-[4px] w-[20px] rounded-full bg-[#dc9ee4]" />
        </div>
        <Slot><MyAsus /></Slot>
        <Slot><Figma /></Slot>
        <Slot dot><Spotify /></Slot>
        <Slot dot>
          <WhatsApp />
          <span className="absolute top-[3px] right-[6px] flex size-[20px] items-center justify-center rounded-full bg-[#dc9ee4] text-[14px] text-black">
            2
          </span>
        </Slot>
        <Slot dot><Excel /></Slot>
      </div>
      <div className="ml-auto flex items-center pr-[25px]">
        <Icon className="h-[8px] w-[14px]" box="0 0 14 8">
          <path d="M1 7l6-6 6 6" fill="none" stroke="white" strokeWidth="1.700" />
        </Icon>
        <Icon className="ml-[23px] h-[18px] w-[21px]" box="0 0 21 18">
          <path d="M4 13a4 4 0 0 1 0-8 6.500 6.500 0 0 1 12-1 5 5 0 0 1 1 9z" fill="#8b807d" />
          <path d="M3.500 13.500a3.500 3.500 0 0 1 .3-7.500c3.200-.6 6.200 1 6.500 4v3.500z" fill="#e5e0df" />
          <circle cx="14.800" cy="12.200" r="5.600" fill="#fff" />
          <circle cx="14.800" cy="12.200" r="3.600" fill="none" stroke="#1a7fd4" strokeWidth="1.600" strokeDasharray="9 2.300" />
        </Icon>
        <div className="ml-[23px] w-[29px] pb-px text-center text-[14.5px] leading-[20px]">
          <div>ENG</div>
          <div>IN</div>
        </div>
        <Icon className="ml-[23px] h-[16px] w-[21px]" box="0 0 21 16">
          <g fill="none" stroke="white" strokeWidth="1.500">
            <path d="M1 5.500a13.400 13.400 0 0 1 19 0M4 8.700a9.200 9.200 0 0 1 13 0M6.800 11.700a5.200 5.200 0 0 1 7.400 0" />
          </g>
          <circle cx="10.500" cy="14" r="1.800" />
        </Icon>
        <Icon className="ml-[9px] h-[15px] w-[20px]" box="0 0 20 15">
          <g fill="none" stroke="white" strokeWidth="1.200">
            <path d="M1 5h3l4.500-4v13L4 10H1zM12 4.500l6.500 6.500M18.500 4.500L12 11" />
          </g>
        </Icon>
        <Icon className="ml-[10px] h-[14px] w-[20px]" box="0 0 20 14">
          <rect x=".8" y=".8" width="16" height="12.400" rx="3" fill="none" stroke="white" strokeWidth="1.500" />
          <rect x="3" y="3" width="10.500" height="8" rx="1" />
          <path d="M17.500 4.500q2.500 0 2.500 2.500t-2.500 2.500z" />
        </Icon>
        <div className="ml-[20px] w-[78px] pb-[3px] text-right text-[14.8px] leading-[20px] whitespace-nowrap">
          <div>13:19</div>
          <div>06-05-2023</div>
        </div>
        <span className="ml-[9px] flex size-[20px] items-center justify-center rounded-full bg-[#dc9ee4] text-[12px] text-black">
          1
        </span>
      </div>
    </footer>
  );
}

export default function App() {
  return (
    <div className="flex h-[1080px] w-[1920px] flex-col overflow-hidden bg-white font-['Roboto',sans-serif] text-[17.5px] leading-[24px]">
      <BrowserTabs />
      <AddressBar />
      <AppHeader />
      <MaintenanceBanner />
      <Toolbar />
      <main className="flex h-[770px]">
        <div className="flex w-[60px] flex-col items-center bg-[#e9e9e9] pt-[16px] text-[#15284f]">
          <Icon className="ml-[-2px] h-[22px] w-[17px]" box="0 0 17 22">
            <g fill="none" stroke="currentColor" strokeWidth="1.400">
              <rect x="1" y="1" width="15" height="20" rx="1" />
              <path d="M1 7.700h15M1 14.300h15" />
            </g>
            <circle cx="4.500" cy="4.400" r="1" />
            <circle cx="4.500" cy="11" r="1" />
            <circle cx="4.500" cy="17.600" r="1" />
          </Icon>
        </div>
        <ModulePanel />
        <div className="flex h-[765px] w-[11px] items-center justify-center gap-[2px] bg-[#e9e9e9] pr-px pb-[3px]">
          <span className="h-[9px] w-px bg-[#8d8d8d]" />
          <span className="h-[9px] w-px bg-[#8d8d8d]" />
        </div>
        <div className="flex h-[765px] min-w-0 flex-1 border-b border-[#e6e6e6]">
          <GridView />
        </div>
      </main>
      <Taskbar />
    </div>
  );
}
